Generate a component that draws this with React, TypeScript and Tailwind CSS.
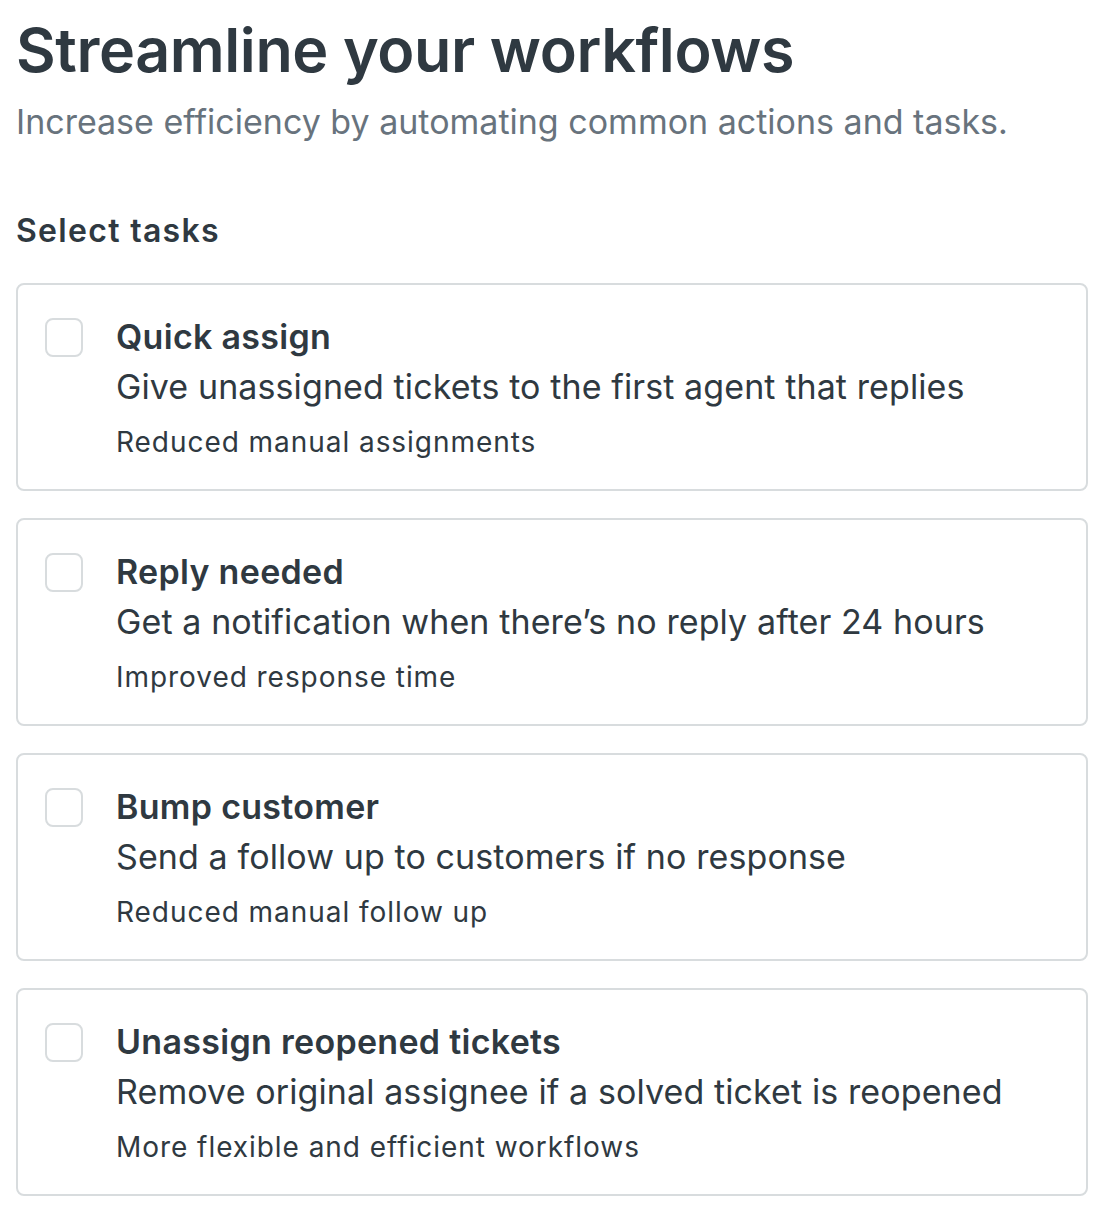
const tasks = [
  {
    title: "Quick assign",
    description: "Give unassigned tickets to the first agent that replies",
    benefit: "Reduced manual assignments",
  },
  {
    title: "Reply needed",
    description: "Get a notification when there’s no reply after 24 hours",
    benefit: "Improved response time",
  },
  {
    title: "Bump customer",
    description: "Send a follow up to customers if no response",
    benefit: "Reduced manual follow up",
  },
  {
    title: "Unassign reopened tickets",
    description: "Remove original assignee if a solved ticket is reopened",
    benefit: "More flexible and efficient workflows",
  },
];

export default function App() {
  return (
    <div className="min-h-screen bg-white px-4 text-[#2f3941] font-['Inter',sans-serif]">
      <h1 className="pt-[6px] text-[61px] leading-[88px] font-semibold tracking-[-0.4px]">
        Streamline your workflows
      </h1>
      <p className="mt-[6px] text-[34px] leading-[44px] text-[#68737d]">
        Increase efficiency by automating common actions and tasks.
      </p>

      <h2 className="mt-[67px] text-[32px] leading-[40px] font-semibold tracking-[1.3px]">
        Select tasks
      </h2>

      <div className="mt-[32px] flex flex-col gap-[27px] pr-[9px]">
        {tasks.map((task) => (
          <label
            key={task.title}
            className="flex gap-[33px] rounded-[8px] border-2 border-[#d8dcde] pl-[27px] pr-[26px] py-[27px] cursor-pointer"
          >
            <input type="checkbox" className="peer sr-only" />
            <span className="mt-[6px] h-[39px] w-[38px] shrink-0 rounded-[8px] border-2 border-[#d8dcde] bg-white" />
            <div className="flex flex-col">
              <div className="text-[34px] leading-[50px] font-semibold tracking-[0.3px]">{task.title}</div>
              <div className="text-[34px] leading-[50px] tracking-[0.1px]">{task.description}</div>
              <div className="mt-[10px] text-[28px] leading-[40px] tracking-[0.95px]">{task.benefit}</div>
            </div>
          </label>
        ))}
      </div>
    </div>
  );
}
